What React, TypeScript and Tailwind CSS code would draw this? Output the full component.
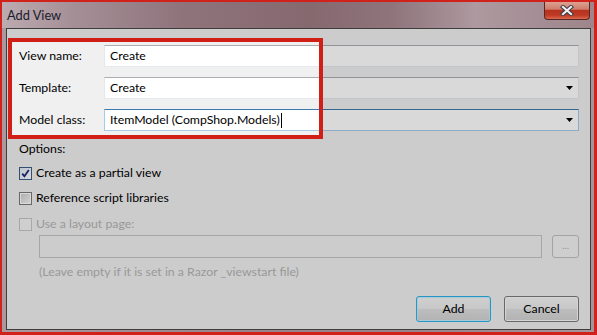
import React from "react";

function Arrow() {
  return (
    <svg width="7" height="4" viewBox="0 0 7 4" className="shrink-0">
      <path d="M0 0H7L3.5 4Z" fill="#000" />
    </svg>
  );
}

function CloseButton() {
  return (
    <div className="mr-[4px] flex h-[18px] w-[46px] items-center justify-center rounded-b-[4px] border border-t-0 border-[#5a2622] bg-[linear-gradient(180deg,#dca293_0%,#cf7d6b_42%,#b8331f_50%,#bf3a25_78%,#d9694c_100%)]">
      <svg width="14" height="11" viewBox="0 0 14 11">
        <path d="M3 2L11 9M11 2L3 9" stroke="#3b3b44" strokeWidth="4.2" strokeLinecap="square" />
        <path d="M3 2L11 9M11 2L3 9" stroke="#eef0f4" strokeWidth="2.2" strokeLinecap="square" />
      </svg>
    </div>
  );
}

function CheckBox({ state }: { state: "checked" | "unchecked" | "disabled" }) {
  if (state === "checked") {
    return (
      <div className="flex h-[13px] w-[13px] shrink-0 items-center justify-center border border-[#3c5d86] bg-[linear-gradient(135deg,#dfe9f5,#ffffff)]">
        <svg width="9" height="9" viewBox="0 0 9 9">
          <path d="M1.2 4.6L3.4 7.2L7.8 1" stroke="#1f2a78" strokeWidth="1.8" fill="none" />
        </svg>
      </div>
    );
  }
  if (state === "unchecked") {
    return (
      <div className="flex h-[13px] w-[13px] shrink-0 items-center justify-center border border-[#7a7a7a] bg-white">
        <div className="h-[9px] w-[9px] bg-[linear-gradient(135deg,#d0d0d0,#f4f4f4)]" />
      </div>
    );
  }
  return (
    <div className="flex h-[13px] w-[13px] shrink-0 items-center justify-center border border-[#c6c6c6] bg-[#f4f4f4]" />
  );
}

export default function App() {
  return (
    <div className="h-[335px] w-[597px] bg-[#d0221b] pb-[3px] pl-[2px] pr-[3px] pt-[2px] font-['Lato',sans-serif] text-[12.3px] text-black">
      <div className="flex h-full flex-col bg-[linear-gradient(90deg,#ab979d_0%,#9a838a_40%,#9a838a_70%,#a8939a_100%)]">
        {/* title bar */}
        <div className="flex h-[26px] shrink-0 items-start justify-between bg-[linear-gradient(90deg,#bcabb0_0%,#a58f96_12%,#8f747c_30%,#86696f_52%,#8f747c_66%,#ad999f_80%,#a58e95_90%,#9e858c_100%)]">
          <div className="pl-[5px] pt-[5px] text-[12.8px] leading-[16px] text-[#17202c]">Add View</div>
          <CloseButton />
        </div>
        {/* client */}
        <div className="relative mb-[2px] ml-[4px] mr-[3px] flex-1 overflow-hidden border border-[#3e3e3e] bg-[#f0f0f0]">
          <div className="flex flex-col pl-[12px] pr-[11px] pt-[16px]">
            {/* View name */}
            <div className="flex h-[22px] items-center">
              <div className="w-[85px] shrink-0">View name:</div>
              <div className="flex h-[22px] flex-1 items-center border border-[#e3e9ef] border-t-[#abadb3] bg-white pl-[5px]">
                Create
              </div>
            </div>
            {/* Template */}
            <div className="mt-[10px] flex h-[22px] items-center">
              <div className="w-[85px] shrink-0">Template:</div>
              <div className="flex h-[22px] flex-1 items-center justify-between border border-[#e3e9ef] border-t-[#abadb3] bg-white pl-[5px] pr-[5px]">
                <span>Create</span>
                <Arrow />
              </div>
            </div>
            {/* Model class */}
            <div className="mt-[10px] flex h-[22px] items-center">
              <div className="w-[85px] shrink-0">Model class:</div>
              <div className="flex h-[22px] flex-1 items-center justify-between border border-[#a6cbe8] border-t-[#3d7bb0] bg-white pl-[5px] pr-[5px]">
                <span className="flex items-center">
                  ItemModel (CompShop.Models)
                  <span className="ml-[1px] inline-block h-[15px] w-[1px] bg-black" />
                </span>
                <Arrow />
              </div>
            </div>

            <div className="mt-[10px] leading-[16px]">Options:</div>

            <div className="mt-[8px] flex h-[16px] items-center gap-[4px]">
              <CheckBox state="checked" />
              <span>Create as a partial view</span>
            </div>
            <div className="mt-[9px] flex h-[16px] items-center gap-[4px]">
              <CheckBox state="unchecked" />
              <span>Reference script libraries</span>
            </div>
            <div className="mt-[10px] flex h-[16px] items-center gap-[4px] text-[#b4b4b4]">
              <CheckBox state="disabled" />
              <span>Use a layout page:</span>
            </div>

            <div className="mt-[3px] flex items-center gap-[10px] pl-[20px]">
              <div className="h-[23px] flex-1 border border-[#c4c4c4] bg-[#f0f0f0]" />
              <div className="flex h-[23px] w-[27px] items-center justify-center rounded-[3px] border border-[#c0c0c0] bg-[#f3f3f3] pb-[2px] text-[10px] text-[#b0b0b0]">
                ...
              </div>
            </div>

            <div className="mt-[6px] pl-[20px] leading-[16px] text-[#b4b4b4]">
              (Leave empty if it is set in a Razor _viewstart file)
            </div>

            <div className="mt-[16px] flex justify-end gap-[13px]">
              <div className="flex h-[26px] w-[75px] items-center justify-center rounded-[3px] border border-[#2bb4ec] bg-[linear-gradient(180deg,#f4f4f4_0%,#ececec_48%,#dedede_52%,#d2d2d2_100%)] shadow-[inset_0_0_0_1px_#c9ecfb]">
                Add
              </div>
              <div className="flex h-[26px] w-[75px] items-center justify-center rounded-[3px] border border-[#7b7b7b] bg-[linear-gradient(180deg,#f4f4f4_0%,#ececec_48%,#dedede_52%,#d2d2d2_100%)] shadow-[inset_0_0_0_1px_#fbfbfb]">
                Cancel
              </div>
            </div>
          </div>

          {/* highlight annotation with dimming */}
          <div className="pointer-events-none absolute left-[1px] top-[9px] h-[101px] w-[315px] border-[4px] border-[#cf1f17] shadow-[0_0_0_9999px_rgba(0,0,0,0.15)]" />
        </div>
      </div>
    </div>
  );
}
